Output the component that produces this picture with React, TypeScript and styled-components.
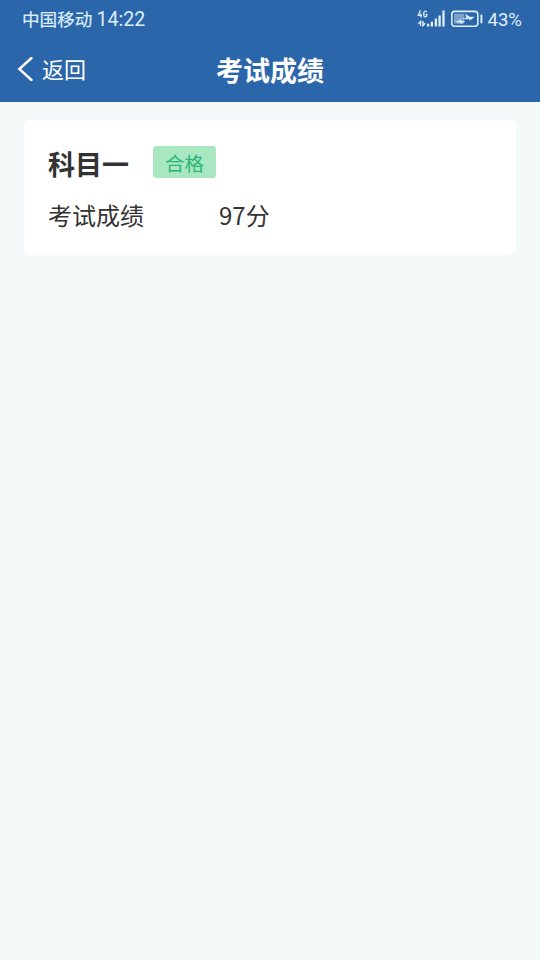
import React from 'react';
import styled, { createGlobalStyle, ThemeProvider } from 'styled-components';

const theme = {
	primary: '#2b66aa',
	background: '#f4f9fa',
	textColor: '#333333',
	statusColor: '#dfeefb',
	passColor: '#2ab777',
	passBackground: '#a9e7c1',
	gutter: 24,
};

const GlobalStyle = createGlobalStyle`
	* {
		box-sizing: border-box;
	}

	body {
		margin: 0;
		background: ${theme.background};
		font-family: Roboto, 'Noto Sans CJK SC', sans-serif;
		color: ${theme.textColor};
	}
`;

const Page = styled.div`
	min-height: 100vh;
	background: ${theme.background};
`;

const Header = styled.header`
	height: 102px;
	background: ${props => props.theme.primary};
`;

const StatusBar = styled.div`
	display: flex;
	align-items: center;
	justify-content: space-between;
	height: 38px;
	padding: 0 18px 0 22px;
	color: ${props => props.theme.statusColor};
	line-height: 38px;
	white-space: nowrap;
`;

const StatusGroup = styled.div`
	display: flex;
	align-items: center;
`;

const Carrier = styled.span`
	padding-top: 1px;
	font-size: 17.6px;
	-webkit-text-stroke: 0.2px currentColor;
`;

const Clock = styled.span`
	margin-left: 4px;
	padding-top: 1px;
	font-size: 19.6px;
`;

const Battery = styled.span`
	margin-left: 4px;
	padding-top: 1px;
	font-size: 18.6px;
`;

const NavBar = styled.nav`
	display: grid;
	grid-template-columns: 1fr auto 1fr;
	align-items: center;
	height: 64px;
	padding: 0 17px;
	color: #fff;
`;

const BackButton = styled.button`
	display: flex;
	align-items: center;
	gap: 8px;
	padding: 0;
	border: 0;
	background: none;
	color: inherit;
	font-family: inherit;
	font-size: 22px;
	line-height: 32px;
`;

const BackLabel = styled.span`
	padding-top: 2px;
`;

const Title = styled.h1`
	margin: 0;
	padding-top: 4px;
	font-size: 27px;
	font-weight: 700;
	line-height: 40px;
`;

const Card = styled.section`
	height: 135px;
	margin: 18px ${props => props.theme.gutter}px 0;
	padding: 26px ${props => props.theme.gutter}px;
	border-radius: 6px;
	background: #fff;
`;

const CardHeading = styled.div`
	display: flex;
	align-items: center;
	gap: 24px;
	height: 32px;
`;

const Subject = styled.h2`
	margin: 0;
	padding-top: 7px;
	font-size: 27px;
	font-weight: 700;
	line-height: 36px;
`;

const Tag = styled.span`
	width: 63px;
	height: 32px;
	border-radius: 3px;
	background: ${props => props.theme.passBackground};
	color: ${props => props.theme.passColor};
	font-size: 19.5px;
	line-height: 37px;
	text-align: center;
`;

const ScoreRow = styled.div`
	display: grid;
	grid-template-columns: 171px 1fr;
	margin-top: 19px;
	font-family: 'Noto Sans CJK SC', sans-serif;
	font-size: 24px;
	line-height: 36px;
`;

function SignalIcon() {
	return (
		<svg width="28" height="20" viewBox="0 0 28 20" fill="none" stroke="currentColor">
			<path d="M3.4 1.2 1.3 6.4h3.7M4 4.4v4" strokeWidth="1.3" />
			<path d="M9.7 3.2c-.2-.8-.7-1.1-1.4-1.1-1 0-1.5.7-1.5 1.6v2.6c0 .9.5 1.6 1.5 1.6s1.5-.7 1.5-1.6v-.8H8.4" strokeWidth="1.3" />
			<path d="M3.6 17v-4.5L1.4 14.7M6 12v4.5L8.2 14.3" strokeWidth="1.4" />
			<path d="M11.1 17.5v-2.7M14.9 17.5v-4.8M18.9 17.5v-8M22.6 17.5v-11M26.5 17.5V1.5" strokeWidth="2.3" />
		</svg>
	);
}

const BatteryShape = styled.svg`
	margin-left: 5px;
`;

function BatteryIcon() {
	return (
		<BatteryShape width="33" height="18" viewBox="0 0 33 18">
			<rect x="1.8" y="1.4" width="26" height="14.8" rx="3" fill="none" stroke="currentColor" strokeWidth="1.6" />
			<rect x="4" y="3.8" width="10.5" height="10" rx="1" fill="currentColor" opacity=".45" />
			<path
				d="M11.5 8.2h4.7l-.6-4.4 4 3h5.2l-5.2 4-.4-2.2-2 .8zM5 10.9h3.6l2.6-2v2h3.8l-4.6 3.4v-1.9H8z"
				fill="currentColor"
			/>
			<path d="M31.4 5.5v7" stroke="currentColor" strokeWidth="2" strokeLinecap="round" />
		</BatteryShape>
	);
}

function BackIcon() {
	return (
		<svg width="17" height="26" viewBox="0 0 17 26" fill="none">
			<path d="M14.5 1 2.3 12l12.2 11" stroke="currentColor" strokeWidth="2.4" strokeLinecap="round" />
		</svg>
	);
}

export default function App() {
	return (
		<ThemeProvider theme={theme}>
			<GlobalStyle />
			<Page>
				<Header>
					<StatusBar>
						<StatusGroup>
							<Carrier>中国移动</Carrier>
							<Clock>14:22</Clock>
						</StatusGroup>
						<StatusGroup>
							<SignalIcon />
							<BatteryIcon />
							<Battery>43%</Battery>
						</StatusGroup>
					</StatusBar>
					<NavBar>
						<BackButton type="button">
							<BackIcon />
							<BackLabel>返回</BackLabel>
						</BackButton>
						<Title>考试成绩</Title>
					</NavBar>
				</Header>
				<Card>
					<CardHeading>
						<Subject>科目一</Subject>
						<Tag>合格</Tag>
					</CardHeading>
					<ScoreRow>
						<span>考试成绩</span>
						<span>97分</span>
					</ScoreRow>
				</Card>
			</Page>
		</ThemeProvider>
	);
}
